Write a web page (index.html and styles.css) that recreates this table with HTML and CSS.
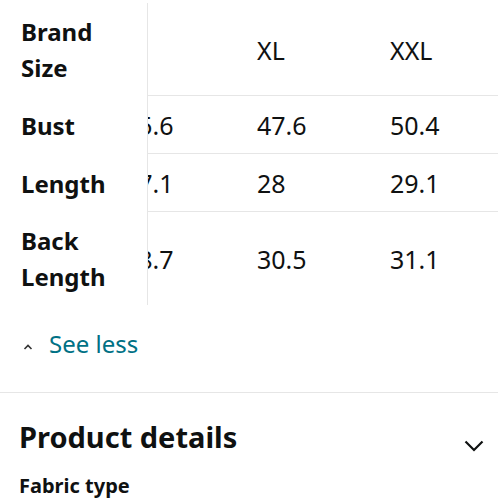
FILE: index.html
```html
<!DOCTYPE html>
<html lang="en">
<head>
<meta charset="utf-8">
<title>Size chart</title>
<link rel="stylesheet" href="styles.css">
</head>
<body>
<div class="size-scroll" id="sizeScroll">
  <div class="size-grid">
    <div class="cell label">Brand Size</div>
    <div class="cell value ruled">L</div>
    <div class="cell value ruled">XL</div>
    <div class="cell value ruled">XXL</div>

    <div class="cell label">Bust</div>
    <div class="cell value ruled">45.6</div>
    <div class="cell value ruled">47.6</div>
    <div class="cell value ruled">50.4</div>

    <div class="cell label">Length</div>
    <div class="cell value ruled">27.1</div>
    <div class="cell value ruled">28</div>
    <div class="cell value ruled">29.1</div>

    <div class="cell label">Back Length</div>
    <div class="cell value">28.7</div>
    <div class="cell value">30.5</div>
    <div class="cell value">31.1</div>
  </div>
</div>

<a class="see-less" href="#">
  <svg class="caret-up" width="10" height="7" viewBox="0 0 10 7" aria-hidden="true"><polyline points="1.5,6 5,2.5 8.5,6" fill="none" stroke="#333" stroke-width="1.6"/></svg>
  <span>See less</span>
</a>

<section class="details">
  <div class="details-head">
    <h2>Product details</h2>
    <svg class="chevron-down" width="20" height="12" viewBox="0 0 20 12" aria-hidden="true"><polyline points="1.5,1.5 10,10 18.5,1.5" fill="none" stroke="#0f1111" stroke-width="2.2"/></svg>
  </div>
  <h3>Fabric type</h3>
</section>
<script src="script.js"></script>
</body>
</html>
```
FILE: styles.css
```css
body {
  margin: 0;
  font-family: "Noto Sans", "Open Sans", sans-serif;
  color: #0f1111;
  background: #fff;
}

.size-scroll {
  margin-top: 3px;
  overflow-x: auto;
  scrollbar-width: none;
}
.size-scroll::-webkit-scrollbar { display: none; }

.size-grid {
  display: grid;
  grid-template-columns: 148px 133px 133px 133px;
  width: max-content;
}

.cell {
  box-sizing: border-box;
  display: flex;
  align-items: center;
  padding: 11px 12px 10px;
  font-size: 24px;
  line-height: 36px;
}

.label {
  position: sticky;
  left: 0;
  z-index: 1;
  background: #fff;
  font-weight: 700;
  padding-left: 21px;
  border-right: 1px solid #e6e6e6;
}

.value {
  font-weight: 400;
  font-size: 25px;
}

.ruled {
  border-bottom: 1px solid #e6e6e6;
}

.see-less {
  display: flex;
  align-items: center;
  margin-top: 23px;
  padding-left: 23px;
  gap: 16px;
  color: #007185;
  text-decoration: none;
  font-size: 24px;
  line-height: 32px;
}
.caret-up { margin-top: 4px; }

.details {
  margin-top: 32px;
  border-top: 1px solid #e6e6e6;
  padding: 25px 14px 0 19px;
}

.details-head {
  display: flex;
  justify-content: space-between;
  align-items: flex-start;
}

.details h2 {
  margin: 0;
  font-size: 29px;
  line-height: 38px;
  font-weight: 700;
}

.chevron-down {
  margin-top: 22px;
}

.details h3 {
  margin: 16px 0 0;
  font-size: 20px;
  line-height: 27px;
  font-weight: 700;
}
```
FILE: script.js
```js
document.getElementById('sizeScroll').scrollLeft = 36;
```
